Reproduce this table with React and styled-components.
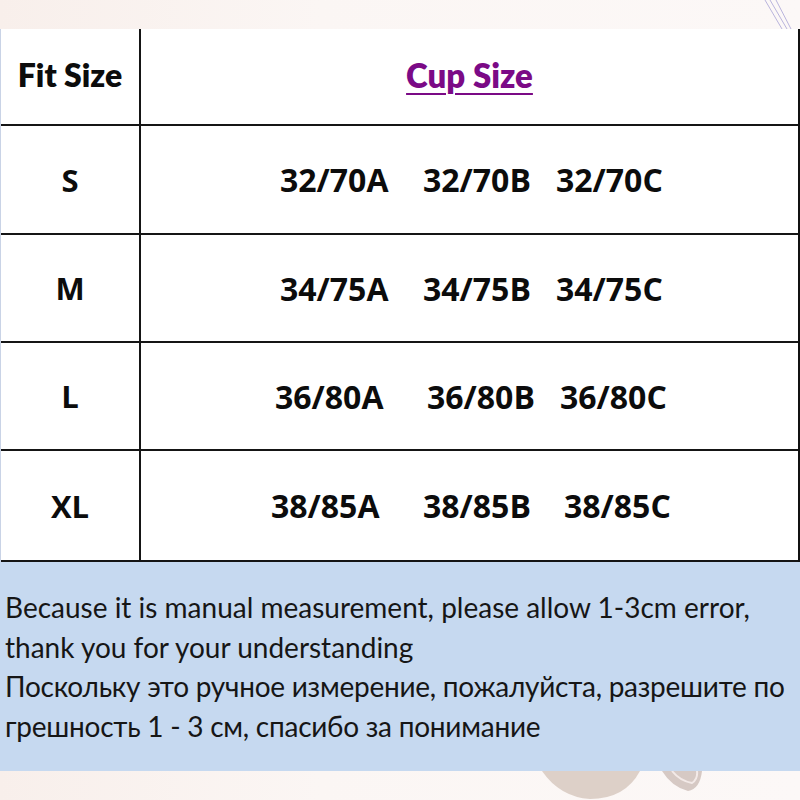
import React from "react";
import styled, { createGlobalStyle } from "styled-components";

const Global = createGlobalStyle`
  html, body { margin: 0; padding: 0; }
  body { width: 800px; height: 800px; overflow: hidden; background: #f7eeea; }
  #root { width: 800px; height: 800px; }
`;

const Page = styled.div`
  position: relative;
  width: 800px;
  height: 800px;
  display: flex;
  flex-direction: column;
  background: linear-gradient(90deg, #f8efeb 0%, #fbf6f4 40%, #fcf8f7 100%);
  overflow: hidden;
`;

const Band = styled.div`
  position: relative;
  height: ${(p) => p.$h}px;
  flex: none;
`;

const Deco = styled.svg`
  position: absolute;
  left: 0;
  top: 0;
`;

const Table = styled.div`
  display: flex;
  flex-direction: column;
  background: #fff;
  border-left: 1px solid #c9d3e6;
  border-right: 2px solid #111;
  flex: none;
`;

const Row = styled.div`
  display: grid;
  grid-template-columns: 140px 1fr;
  height: ${(p) => p.$h}px;
  box-sizing: border-box;
  border-bottom: 2px solid #151515;
`;

const SizeCell = styled.div`
  display: flex;
  align-items: center;
  justify-content: center;
  border-right: 2px solid #151515;
  font-family: ${(p) => (p.$head ? '"Lato"' : '"Open Sans"')}, sans-serif;
  font-weight: ${(p) => (p.$head ? 800 : 700)};
  font-size: ${(p) => (p.$head ? 32 : 31)}px;
  color: #0c0c0c;
  padding-bottom: ${(p) => (p.$head ? 4 : 0)}px;
`;

const HeadCell = styled.div`
  display: flex;
  align-items: center;
  justify-content: center;
  padding-bottom: 4px;
`;

const CupTitle = styled.span`
  font-family: "Lato", sans-serif;
  font-weight: 800;
  font-size: 33px;
  color: #7b0a86;
  text-decoration: underline;
  text-decoration-thickness: 2px;
  text-underline-offset: 5px;
`;

const Values = styled.div`
  display: flex;
  align-items: center;
  padding-left: ${(p) => p.$pad}px;
`;

const Value = styled.span`
  flex: none;
  width: ${(p) => (p.$w ? `${p.$w}px` : "auto")};
  font-family: "Open Sans", sans-serif;
  font-weight: 700;
  font-size: 32px;
  color: #0c0c0c;
  white-space: nowrap;
`;

const Note = styled.div`
  background: #c6d9f0;
  height: 209px;
  box-sizing: border-box;
  padding: 26px 0 0 5px;
  flex: none;
  font-family: "Lato", sans-serif;
  font-size: 28px;
  line-height: 39.5px;
  color: #161616;
`;

const Line = styled.div`
  white-space: nowrap;
  letter-spacing: ${(p) => (p.$tight ? "-0.25px" : "0")};
`;

const CELL_START = 142;

const rows = [
  { size: "S", h: 109, xs: [281, 424, 557], vals: ["32/70A", "32/70B", "32/70C"] },
  { size: "M", h: 108, xs: [281, 424, 557], vals: ["34/75A", "34/75B", "34/75C"] },
  { size: "L", h: 108, xs: [276, 428, 561], vals: ["36/80A", "36/80B", "36/80C"] },
  { size: "XL", h: 111, xs: [272, 424, 565], vals: ["38/85A", "38/85B", "38/85C"] },
];

export default function App() {
  return (
    <Page>
      <Global />
      <Band $h={29}>
        <Deco width="800" height="29" viewBox="0 0 800 29">
          <path d="M765 0 L782 29 M770 0 L787 29 M776 0 L791 29" stroke="#b9b4dc" strokeWidth="1" fill="none" />
        </Deco>
      </Band>
      <Table>
        <Row $h={97}>
          <SizeCell $head>Fit Size</SizeCell>
          <HeadCell>
            <CupTitle>Cup Size</CupTitle>
          </HeadCell>
        </Row>
        {rows.map((r) => (
          <Row key={r.size} $h={r.h}>
            <SizeCell>{r.size}</SizeCell>
            <Values $pad={r.xs[0] - CELL_START}>
              <Value $w={r.xs[1] - r.xs[0]}>{r.vals[0]}</Value>
              <Value $w={r.xs[2] - r.xs[1]}>{r.vals[1]}</Value>
              <Value>{r.vals[2]}</Value>
            </Values>
          </Row>
        ))}
      </Table>
      <Note>
        <Line>Because it is manual measurement, please allow 1-3cm error,</Line>
        <Line>thank you for your understanding</Line>
        <Line $tight>Поскольку это ручное измерение, пожалуйста, разрешите по</Line>
        <Line $tight>грешность 1 - 3 см, спасибо за понимание</Line>
      </Note>
      <Band $h={29}>
        <Deco width="800" height="29" viewBox="0 0 800 29">
          <path d="M542 0 Q560 26 590 28 Q625 28 640 0 Z" fill="#ddd0c8" />
          <path d="M662 0 Q672 16 688 20 Q700 18 702 0 Z" fill="#d6c9c4" />
          <path d="M672 0 Q680 10 692 12 Q698 8 697 0" stroke="#f3eae8" strokeWidth="2" fill="none" />
        </Deco>
      </Band>
    </Page>
  );
}
